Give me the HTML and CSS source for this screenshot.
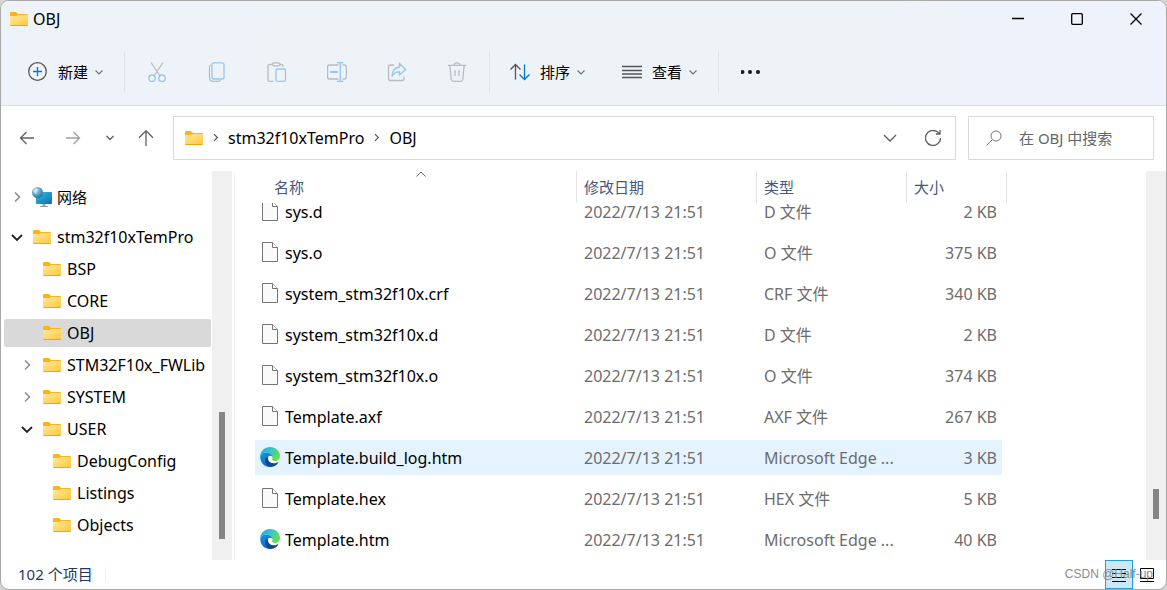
FILE: index.html
```html
<!DOCTYPE html>
<html lang="zh-CN">
<head>
    <meta charset="UTF-8">
    <meta name="viewport" content="width=device-width, initial-scale=1.0">
    <title>OBJ</title>
    <link rel="stylesheet" href="styles.css">
</head>
<body>
    <!-- Shared icons -->
    <svg class="sprite" aria-hidden="true">
        <defs>
            <linearGradient id="folder-fill" x1="0" y1="0" x2="1" y2="1">
                <stop offset="0" stop-color="#ffe9a2"/>
                <stop offset="1" stop-color="#ffc93c"/>
            </linearGradient>
            <linearGradient id="screen-fill" x1="0" y1="0" x2="1" y2="1">
                <stop offset="0" stop-color="#2cc3d5"/>
                <stop offset="1" stop-color="#0f6cbd"/>
            </linearGradient>
            <radialGradient id="globe-fill" cx="0.35" cy="0.3" r="0.8">
                <stop offset="0" stop-color="#c4e6f4"/>
                <stop offset="0.5" stop-color="#5aa5cb"/>
                <stop offset="1" stop-color="#28648f"/>
            </radialGradient>
            <linearGradient id="edge-top" x1="0" y1="0" x2="1" y2="0.5">
                <stop offset="0" stop-color="#1e9fdc"/>
                <stop offset="0.5" stop-color="#34c6cf"/>
                <stop offset="1" stop-color="#66df4d"/>
            </linearGradient>
            <linearGradient id="edge-left" x1="0" y1="0" x2="0.5" y2="1">
                <stop offset="0" stop-color="#1795dc"/>
                <stop offset="1" stop-color="#0a6dcb"/>
            </linearGradient>
        </defs>
        <symbol id="folder" viewBox="0 0 18 14">
            <path d="M0 1Q0 0 1 0H6L8 2H17Q18 2 18 3V6H0Z" fill="#f9b517"/>
            <path d="M0 4H6L8 3H18V13H0Z" fill="url(#folder-fill)"/>
            <path d="M0 13H18V13.2Q18 14 17 14H1Q0 14 0 13.2Z" fill="#eba61b"/>
        </symbol>
        <symbol id="file" viewBox="0 0 20 20">
            <path d="M2.5 .5H12.5L17.5 5.5V19.5H2.5Z" fill="#fafafa" stroke="#757575"/>
            <path d="M12.5 .5V5.5H17.5" fill="#fff" stroke="#757575"/>
        </symbol>
        <symbol id="edge" viewBox="0 0 20 20">
            <path d="M.2 9C.8 3.600 5 0 10 0C16 0 20 4.200 20 9C20 12.400 17.500 14 14.700 14C12.500 14 11.500 13.200 12 12.500C13 11 12.500 8.200 9.500 6.500C6 4.600 2 5.500 .2 9Z" fill="url(#edge-top)"/>
            <path d="M.2 9C2 5.500 6.500 4.600 9.800 6.600C11.500 7.600 12.300 9 12.200 10C11.500 8.700 9.600 8.400 8.500 9.800C7.500 11 8 15.500 12.500 17.500L11 19.900C5 20.500 0 16 .2 9Z" fill="url(#edge-left)"/>
            <path d="M8.400 9.500C7.300 12.500 9.500 16 13.500 16.300C15.800 16.400 17.500 15.600 18.600 14.800C17.300 18 14.500 20 11 20C7 19.500 4.800 16 5 13.500C5.200 11.500 6.500 10 8.400 9.500Z" fill="#114a8b"/>
            <path d="M8.400 9.600C7.500 11 8 13.500 10 15C12 16.200 15.500 16.200 18.600 14.500L19.200 13.200C16 14.800 11.300 14.300 12 12.300C12.600 11.600 12.300 10.500 11.700 9.600C10.900 8.600 9.300 8.500 8.400 9.600Z" fill="#fff"/>
        </symbol>
        <symbol id="network" viewBox="0 0 20 20">
            <rect x="4" y="5" width="16" height="12" rx="1" fill="url(#screen-fill)"/>
            <path d="M10.500 17H13.500V19H16V20H8V19H10.500Z" fill="#98a4ad"/>
            <circle cx="5.500" cy="5.500" r="5.500" fill="url(#globe-fill)"/>
            <path d="M2 2.500Q5 .5 6.500 3Q4 4.500 4.500 7Q2 7 1.500 4Z" fill="#d9f0f8" opacity=".6"/>
        </symbol>
        <symbol id="chevron-right" viewBox="0 0 12 12">
            <path d="M4 1.500L8.500 6L4 10.500"/>
        </symbol>
        <symbol id="chevron-down" viewBox="0 0 12 12">
            <path d="M1 4L6 9L11 4"/>
        </symbol>
        <symbol id="caret" viewBox="0 0 10 10">
            <path d="M1.500 3.500L5 7L8.500 3.500"/>
        </symbol>
    </svg>

    <div class="window">
        <header class="top">
            <div class="title-bar">
                <svg class="folder"><use href="#folder"/></svg>
                <h1 class="title">OBJ</h1>
                <div class="window-buttons">
                    <button type="button" aria-label="最小化"><svg viewBox="0 0 12 12"><path d="M0 5.500H12"/></svg></button>
                    <button type="button" aria-label="最大化"><svg viewBox="0 0 12 12"><rect x=".7" y=".7" width="10.600" height="10.600" rx="1"/></svg></button>
                    <button type="button" aria-label="关闭"><svg viewBox="0 0 12 12"><path d="M.5 .5L11.500 11.500M11.500 .5L.5 11.500"/></svg></button>
                </div>
            </div>

            <div class="toolbar">
                <button type="button" class="menu-button">
                    <svg class="tool" viewBox="0 0 20 20"><circle class="dark" cx="9.500" cy="9.500" r="8.800"/><path class="blue" d="M9.500 5V14M5 9.500H14"/></svg>
                    新建
                    <svg class="caret"><use href="#caret"/></svg>
                </button>
                <span class="divider"></span>
                <button type="button" class="icon-button" aria-label="剪切" disabled>
                    <svg class="tool" viewBox="0 0 20 20"><path class="gray" d="M4 .5L13 14M16 .5L7 14"/><circle class="sky" cx="5" cy="16.200" r="3.200"/><circle class="sky" cx="15" cy="16.200" r="3.200"/></svg>
                </button>
                <button type="button" class="icon-button" aria-label="复制" disabled>
                    <svg class="tool" viewBox="0 0 20 20"><path class="gray" d="M4 3Q2.500 3.500 2.500 5V15Q2.500 19.300 6.500 19.300H11.500Q13 19.300 13.500 18"/><rect class="sky" x="5" y=".8" width="12" height="16.200" rx="2"/></svg>
                </button>
                <button type="button" class="icon-button" aria-label="粘贴" disabled>
                    <svg class="tool" viewBox="0 0 20 20"><path class="gray" d="M5.500 2.500H2.500Q1 2.500 1 4V18Q1 19.300 2.500 19.300H6.500M12.500 2.500H14.500Q16 2.500 16 4V5"/><rect class="gray" x="5.500" y=".8" width="7.500" height="3" rx="1.500"/><rect class="sky" x="9" y="7" width="9.500" height="12.300" rx="1.500"/></svg>
                </button>
                <button type="button" class="icon-button" aria-label="重命名" disabled>
                    <svg class="tool" viewBox="0 0 20 20"><path class="gray" d="M11.500 3H2.500Q.6 3 .6 5V15Q.6 17 2.500 17H11.500M15.500 3H17.500Q19.400 3 19.400 5V15Q19.400 17 17.500 17H15.500"/><path class="sky" d="M13.300 .8V19.200M10 .6H16.500M10 19.400H16.500"/><path class="sky thick" d="M3 10H11"/></svg>
                </button>
                <button type="button" class="icon-button" aria-label="共享" disabled>
                    <svg class="tool" viewBox="0 0 20 20"><path class="gray" d="M7 3H3.500Q1.500 3 1.500 5V16.500Q1.500 18.500 3.500 18.500H15Q17 18.500 17 16.500V14.500"/><path class="sky" d="M12.500 1.500L18.700 7.500L12.500 13V9.800Q7.500 9.500 5 14.500Q5 6 12.500 5Z"/></svg>
                </button>
                <button type="button" class="icon-button" aria-label="删除" disabled>
                    <svg class="tool" viewBox="0 0 20 20"><path class="gray" d="M1 3.300H19M7 3Q7.500 .8 10 .8Q12.500 .8 13 3M2.800 3.500L4.300 17.500Q4.500 19.300 6.300 19.300H13.700Q15.500 19.300 15.700 17.500L17.200 3.500M8 8V14M12 8V14"/></svg>
                </button>
                <span class="divider"></span>
                <button type="button" class="menu-button">
                    <svg class="tool" viewBox="0 0 20 20"><path class="dark" d="M5.500 17.500V2.500M.5 7.500L5.500 2.500L10.500 7.500"/><path class="blue" d="M14.500 2.500V17M9.500 12.500L14.500 17.500L19.500 12.500"/></svg>
                    排序
                    <svg class="caret"><use href="#caret"/></svg>
                </button>
                <button type="button" class="menu-button">
                    <svg class="tool" viewBox="0 0 20 20"><path class="dark" d="M0 4.500H20M0 8.500H20M0 12H20M0 15.500H20"/></svg>
                    查看
                    <svg class="caret"><use href="#caret"/></svg>
                </button>
                <span class="divider"></span>
                <button type="button" class="icon-button" aria-label="更多">
                    <svg class="tool dots" viewBox="0 0 20 20"><circle cx="1.500" cy="10" r="2"/><circle cx="9" cy="10" r="2"/><circle cx="17" cy="10" r="2"/></svg>
                </button>
            </div>
        </header>

        <div class="navigation">
            <button type="button" class="nav-wide" aria-label="后退"><svg viewBox="0 0 16 16"><path d="M15 8H1.500M7.500 2L1.500 8L7.500 14"/></svg></button>
            <button type="button" class="nav-wide" aria-label="前进" disabled><svg viewBox="0 0 16 16"><path d="M1 8H14.500M8.500 2L14.500 8L8.500 14"/></svg></button>
            <button type="button" class="nav-recent" aria-label="最近浏览的位置"><svg viewBox="0 0 16 16"><path d="M4.500 6L8 9.500L11.500 6"/></svg></button>
            <button type="button" class="nav-up" aria-label="上移"><svg viewBox="0 0 16 16"><path d="M8 16V.8M1 7.800L8 .8L15 7.800"/></svg></button>
            <div class="address">
                <svg class="folder"><use href="#folder"/></svg>
                <span class="crumb-arrow"><svg><use href="#chevron-right"/></svg></span>
                <a href="#">stm32f10xTemPro</a>
                <span class="crumb-arrow"><svg><use href="#chevron-right"/></svg></span>
                <a href="#">OBJ</a>
                <button type="button" class="history" aria-label="以前的位置"><svg viewBox="0 0 16 16"><path d="M2 5L8 11L14 5"/></svg></button>
                <button type="button" class="refresh" aria-label="刷新"><svg viewBox="0 0 16 16"><path d="M15.500 8A7.500 7.500 0 1 1 12.500 2L15 4M15 0V4H11"/></svg></button>
            </div>
            <label class="search">
                <svg viewBox="0 0 16 16"><circle cx="10" cy="6" r="5"/><path d="M6.300 9.700L.5 15.500"/></svg>
                <input type="search" placeholder="在 OBJ 中搜索" aria-label="搜索">
            </label>
        </div>

        <main class="content">
            <nav class="sidebar">
                <ul class="tree">
                    <li class="network"><a href="#"><svg class="toggle"><use href="#chevron-right"/></svg><svg class="network-icon"><use href="#network"/></svg>网络</a></li>
                    <li><a href="#"><svg class="toggle open"><use href="#chevron-down"/></svg><svg class="folder"><use href="#folder"/></svg>stm32f10xTemPro</a></li>
                    <li><a href="#" class="level-1"><span class="toggle"></span><svg class="folder"><use href="#folder"/></svg>BSP</a></li>
                    <li><a href="#" class="level-1"><span class="toggle"></span><svg class="folder"><use href="#folder"/></svg>CORE</a></li>
                    <li><a href="#" class="level-1 selected"><span class="toggle"></span><svg class="folder"><use href="#folder"/></svg>OBJ</a></li>
                    <li><a href="#" class="level-1"><svg class="toggle"><use href="#chevron-right"/></svg><svg class="folder"><use href="#folder"/></svg>STM32F10x_FWLib</a></li>
                    <li><a href="#" class="level-1"><svg class="toggle"><use href="#chevron-right"/></svg><svg class="folder"><use href="#folder"/></svg>SYSTEM</a></li>
                    <li><a href="#" class="level-1"><svg class="toggle open"><use href="#chevron-down"/></svg><svg class="folder"><use href="#folder"/></svg>USER</a></li>
                    <li><a href="#" class="level-2"><span class="toggle"></span><svg class="folder"><use href="#folder"/></svg>DebugConfig</a></li>
                    <li><a href="#" class="level-2"><span class="toggle"></span><svg class="folder"><use href="#folder"/></svg>Listings</a></li>
                    <li><a href="#" class="level-2"><span class="toggle"></span><svg class="folder"><use href="#folder"/></svg>Objects</a></li>
                </ul>
            </nav>
            <div class="scrollbar tree-scroll"><span class="thumb"></span></div>

            <section class="files">
                <table>
                    <thead>
                        <tr>
                            <th class="name">名称<svg class="sort" viewBox="0 0 10 6"><path d="M.5 5.500L5 1L9.500 5.500"/></svg></th>
                            <th class="date">修改日期</th>
                            <th class="type">类型</th>
                            <th class="size">大小</th>
                        </tr>
                    </thead>
                    <tbody>
                        <tr><td><span class="file"><svg><use href="#file"/></svg>sys.d</span></td><td>2022/7/13 21:51</td><td>D 文件</td><td>2 KB</td></tr>
                        <tr><td><span class="file"><svg><use href="#file"/></svg>sys.o</span></td><td>2022/7/13 21:51</td><td>O 文件</td><td>375 KB</td></tr>
                        <tr><td><span class="file"><svg><use href="#file"/></svg>system_stm32f10x.crf</span></td><td>2022/7/13 21:51</td><td>CRF 文件</td><td>340 KB</td></tr>
                        <tr><td><span class="file"><svg><use href="#file"/></svg>system_stm32f10x.d</span></td><td>2022/7/13 21:51</td><td>D 文件</td><td>2 KB</td></tr>
                        <tr><td><span class="file"><svg><use href="#file"/></svg>system_stm32f10x.o</span></td><td>2022/7/13 21:51</td><td>O 文件</td><td>374 KB</td></tr>
                        <tr><td><span class="file"><svg><use href="#file"/></svg>Template.axf</span></td><td>2022/7/13 21:51</td><td>AXF 文件</td><td>267 KB</td></tr>
                        <tr class="hover"><td><span class="file"><svg><use href="#edge"/></svg>Template.build_log.htm</span></td><td>2022/7/13 21:51</td><td>Microsoft Edge ...</td><td>3 KB</td></tr>
                        <tr><td><span class="file"><svg><use href="#file"/></svg>Template.hex</span></td><td>2022/7/13 21:51</td><td>HEX 文件</td><td>5 KB</td></tr>
                        <tr><td><span class="file"><svg><use href="#edge"/></svg>Template.htm</span></td><td>2022/7/13 21:51</td><td>Microsoft Edge ...</td><td>40 KB</td></tr>
                    </tbody>
                </table>
            </section>
            <div class="scrollbar list-scroll"><span class="thumb"></span></div>
        </main>

        <footer class="status">
            <span class="count">102 个项目</span>
            <div class="views">
                <button type="button" class="view active" aria-label="详细信息"><svg viewBox="0 0 14 14"><path d="M0 1.500H14M0 5.500H14M0 9.500H14M0 13.500H14"/></svg></button>
                <button type="button" class="view" aria-label="大图标"><svg viewBox="0 0 14 14"><path d="M.5 .5H13.500V10.500H.5ZM0 13.500H14"/></svg></button>
            </div>
            <span class="watermark">CSDN @Half-up</span>
        </footer>
    </div>
</body>
</html>
```
FILE: styles.css
```css
* {
    margin: 0;
    padding: 0;
    box-sizing: border-box;
}

html, body {
    height: 100%;
    overflow: hidden;
}

body {
    background: #d4d4d4;
    color: #000;
    font-family: "Noto Sans", "Noto Sans CJK SC", sans-serif;
    font-size: 15px;
    line-height: 20px;
}

button, input {
    font: inherit;
    color: inherit;
    border: 0;
    background: none;
}

a {
    color: inherit;
    text-decoration: none;
}

svg {
    display: block;
    flex: none;
    fill: none;
    stroke: none;
}

.sprite {
    position: absolute;
    width: 0;
    height: 0;
}

.window {
    display: flex;
    flex-direction: column;
    height: 100vh;
    border: 1px solid #a8a8a8;
    border-radius: 9px;
    background: #fff;
    overflow: hidden;
}

.folder {
    width: 18px;
    height: 14px;
}

/* Title bar and toolbar */
.top {
    background: linear-gradient(100deg, #eef3fb, #eef3f8 30%, #eef3f8 75%, #eef2fb 85%);
    border-bottom: 1px solid #dadde2;
}

.title-bar {
    display: flex;
    align-items: center;
    height: 37px;
    padding: 0 1px 2px 9px;
}

.title {
    margin-left: 5px;
    font-size: 16px;
    font-weight: 400;
}

.window-buttons {
    display: flex;
    align-self: stretch;
    margin-left: auto;
}

.window-buttons button {
    display: flex;
    align-items: center;
    justify-content: center;
    width: 59px;
}

.window-buttons svg {
    width: 12px;
    height: 12px;
    stroke: #000;
    stroke-width: 1.3;
}

.toolbar {
    display: flex;
    align-items: center;
    height: 67px;
    padding-left: 9px;
}

.menu-button {
    display: flex;
    align-items: center;
    height: 40px;
    padding: 0 18px;
}

.tool {
    width: 20px;
    height: 20px;
    stroke-width: 1.3;
}

.menu-button .tool {
    margin-right: 10px;
}

.caret {
    width: 10px;
    height: 10px;
    margin-left: 6px;
    stroke: #6b6e72;
    stroke-width: 1.1;
}

.icon-button {
    display: flex;
    align-items: center;
    justify-content: center;
    width: 60px;
    height: 40px;
}

.divider {
    width: 1px;
    height: 40px;
    margin: 0 2px;
    background: #dfe3e8;
}

.dark { stroke: #555; }
.blue { stroke: #0078d4; }
.gray { stroke: #b9bdc1; }
.sky { stroke: #91c8f0; }
.thick { stroke-width: 2; }

.dots {
    fill: #1a1a1a;
}

/* Navigation row */
.navigation {
    display: flex;
    align-items: center;
    height: 65px;
    padding: 0 12px 2px 3px;
}

.navigation button {
    display: flex;
    align-items: center;
    justify-content: center;
    height: 42px;
}

.navigation button svg {
    width: 16px;
    height: 16px;
    stroke: #5f5f5f;
    stroke-width: 1.3;
}

.navigation button:disabled svg {
    stroke: #a0a0a0;
}

.nav-wide { width: 46px; }
.nav-recent { width: 28px; }
.nav-up { width: 44px; }

.address {
    display: flex;
    flex: 1;
    align-items: center;
    height: 44px;
    margin-left: 5px;
    padding-left: 11px;
    border: 1px solid #d9d9d9;
    font-size: 16px;
}

.crumb-arrow {
    display: flex;
    justify-content: center;
    width: 25px;
}

.crumb-arrow svg {
    width: 9px;
    height: 9px;
    stroke: #555;
    stroke-width: 1.6;
}

.history {
    width: 42px;
    margin-left: auto;
}

.refresh {
    width: 44px;
}

.search {
    display: flex;
    align-items: center;
    gap: 17px;
    width: 186px;
    height: 44px;
    margin-left: 12px;
    padding-left: 17px;
    border: 1px solid #d9d9d9;
}

.search svg {
    width: 16px;
    height: 16px;
    stroke: #777;
}

.search input {
    flex: 1;
    min-width: 0;
    outline: 0;
}

.search input::placeholder {
    color: #666;
    opacity: 1;
}

/* Folder tree */
.content {
    display: flex;
    flex: 1;
    min-height: 0;
}

.sidebar {
    width: 211px;
    padding: 12px 1px 0 3px;
    overflow: hidden;
}

.tree {
    display: flex;
    flex-direction: column;
    gap: 4px;
    font-size: 16px;
    list-style: none;
}

.tree a {
    display: flex;
    align-items: center;
    height: 28px;
    padding-left: 7px;
    border-radius: 2px;
    white-space: nowrap;
}

.tree .network {
    margin-bottom: 8px;
    font-size: 15px;
}

.tree .level-1 { padding-left: 17px; }
.tree .level-2 { padding-left: 27px; }
.tree .selected { background: #d9d9d9; }

.toggle {
    width: 12px;
    height: 12px;
    margin-right: 10px;
    stroke: #8a8a8a;
    stroke-width: 1.5;
}

.toggle.open {
    stroke: #222;
    stroke-width: 1.8;
}

.tree .folder {
    margin-right: 6px;
}

.network-icon {
    width: 20px;
    height: 20px;
    margin: 0 5px 0 -1px;
}

.scrollbar {
    display: flex;
    flex-direction: column;
    align-items: center;
    justify-content: flex-end;
    flex: none;
    width: 20px;
    background: #f0f0f0;
}

.thumb {
    width: 6px;
    background: #858585;
}

.tree-scroll {
    padding-bottom: 21px;
}

.tree-scroll .thumb {
    height: 127px;
}

.list-scroll {
    padding-bottom: 41px;
}

.list-scroll .thumb {
    height: 30px;
}

/* File list, opens scrolled to the last row */
.files {
    display: flex;
    flex: 1;
    flex-direction: column-reverse;
    align-items: flex-start;
    min-width: 0;
    margin-left: 2px;
    padding-left: 20px;
    border-left: 1px solid #f3f3f3;
    overflow: hidden;
}

table {
    flex: none;
    width: 752px;
    table-layout: fixed;
    border-collapse: separate;
    border-spacing: 0;
}

th {
    position: sticky;
    top: 0;
    z-index: 1;
    height: 32px;
    padding-left: 7px;
    border-right: 1px solid #e5e5e5;
    background: #fff;
    color: #44597c;
    font-weight: 400;
    text-align: left;
}

.name {
    width: 322px;
    padding-left: 19px;
}

.date { width: 180px; }
.type { width: 150px; }
.size { width: 100px; }

.sort {
    position: absolute;
    top: 0;
    left: 50%;
    width: 10px;
    height: 6px;
    stroke: #666;
}

td {
    height: 41px;
    padding-left: 7px;
    border: solid transparent;
    border-width: 3px 0;
    background-clip: padding-box;
    color: #6d6d6d;
    font-size: 16px;
    white-space: nowrap;
}

td:first-child {
    padding-left: 5px;
    border-radius: 3px 0 0 3px;
    color: #000;
}

td:last-child {
    padding-right: 5px;
    border-right-width: 5px;
    text-align: right;
}

.hover td {
    background-color: #e5f3ff;
}

.file {
    display: flex;
    align-items: center;
    gap: 5px;
}

.file svg {
    width: 20px;
    height: 20px;
    margin-bottom: 2px;
}

/* Status bar */
.status {
    display: flex;
    position: relative;
    align-items: center;
    height: 29px;
    padding-left: 17px;
    color: #1e395b;
}

.count {
    margin-bottom: 2px;
    padding-right: 12px;
    border-right: 1px solid #f0f0f0;
    line-height: 14px;
}

.views {
    display: flex;
    align-self: stretch;
    margin-left: auto;
    padding-right: 5px;
}

.view {
    display: flex;
    align-items: center;
    justify-content: center;
    width: 28px;
    border: 1px solid transparent;
}

.view.active {
    border-color: #26a0da;
    background: #cce8f6;
}

.view svg {
    width: 14px;
    height: 14px;
    stroke: #000;
}

.watermark {
    position: absolute;
    right: 13px;
    padding-bottom: 1px;
    color: #8c8c8c;
    font-family: "Liberation Sans", sans-serif;
    font-size: 12px;
}
```
